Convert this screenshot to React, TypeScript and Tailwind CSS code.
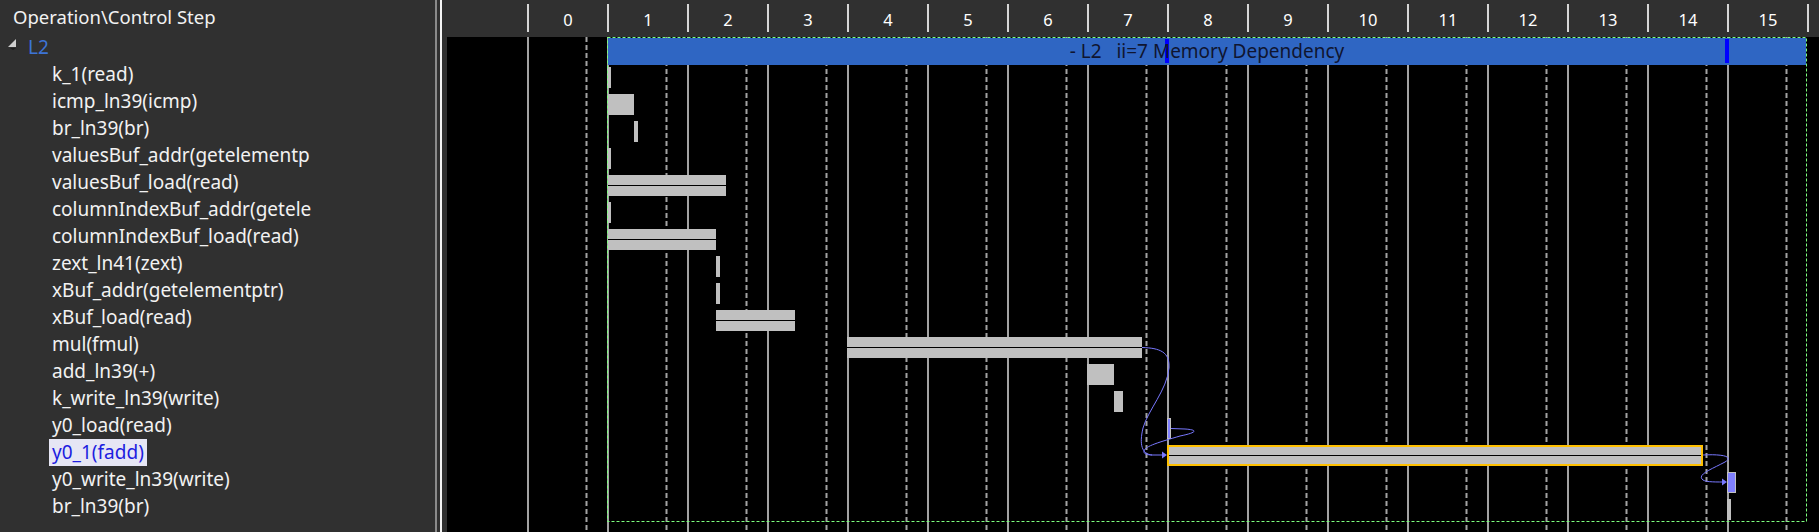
import React from "react";

const ops = [
  "k_1(read)",
  "icmp_ln39(icmp)",
  "br_ln39(br)",
  "valuesBuf_addr(getelementp",
  "valuesBuf_load(read)",
  "columnIndexBuf_addr(getele",
  "columnIndexBuf_load(read)",
  "zext_ln41(zext)",
  "xBuf_addr(getelementptr)",
  "xBuf_load(read)",
  "mul(fmul)",
  "add_ln39(+)",
  "k_write_ln39(write)",
  "y0_load(read)",
  "y0_1(fadd)",
  "y0_write_ln39(write)",
  "br_ln39(br)",
];

// bars in page x coords: [x0, x1, kind]
type Kind = "plain" | "double" | "mem" | "sel";
const bars: [number, number, Kind][] = [
  [607, 611, "plain"],
  [608, 634, "plain"],
  [634, 638, "plain"],
  [607, 611, "plain"],
  [608, 726, "double"],
  [607, 611, "plain"],
  [608, 716, "double"],
  [716, 720, "plain"],
  [716, 720, "plain"],
  [716, 795, "double"],
  [847, 1142, "double"],
  [1087, 1114, "plain"],
  [1114, 1123, "plain"],
  [1167, 1171, "mem"],
  [1167, 1703, "sel"],
  [1727, 1736, "mem"],
  [1727, 1731, "plain"],
];

const steps = Array.from({ length: 16 }, (_, i) => i);

function LeftPanel() {
  return (
    <div className="w-[435px] shrink-0 text-[19px] text-[#f2f2f2]">
      <div className="h-[34px] pl-[13px] flex items-center text-[18.5px]">Operation\Control Step</div>
      <div className="h-[27px] flex items-center">
        <svg width="28" height="27" className="block">
          <polygon points="16,5 16,13 8,13" fill="#cfcfcf" />
          <polygon points="10,14 16,14 13,16" fill="#1e1e1e" />
        </svg>
        <span className="text-[#3d74d6]">L2</span>
      </div>
      {ops.map((op, i) => (
        <div key={i} className="h-[27px] flex items-center pl-[49px]">
          {op === "y0_1(fadd)" ? (
            <span className="h-[27px] flex items-center px-[3px] bg-[#e6e6f4] text-[#1d1de0]">{op}</span>
          ) : (
            <span className="px-[3px] whitespace-nowrap">{op}</span>
          )}
        </div>
      ))}
    </div>
  );
}

function Splitter() {
  return (
    <div className="w-[12px] shrink-0 flex">
      <div className="w-[2px] bg-[#8a8a8a]" />
      <div className="w-[3px]" />
      <div className="w-[2px] bg-[#f4f4f4]" />
    </div>
  );
}

function StepHeader() {
  return (
    <div className="h-[37px] flex text-[16.5px] text-white">
      <div className="w-[80px] shrink-0" />
      {steps.map((s) => (
        <div
          key={s}
          className="w-[80px] shrink-0 mt-[4px] h-[28px] pt-[4px] border-l-2 border-[#d6d6d6] flex items-center justify-center"
        >
          {s}
        </div>
      ))}
      <div className="w-[12px] shrink-0 mt-[4px] h-[28px] border-l-2 border-[#d6d6d6]" />
    </div>
  );
}

function Chart() {
  return (
    <div className="relative flex-1 bg-black overflow-hidden">
      <svg width={1372} height={495} viewBox="447 37 1372 495" className="block">
        {/* grid */}
        {steps.map((s) => (
          <line key={"s" + s} x1={528 + 80 * s} y1={37} x2={528 + 80 * s} y2={532} stroke="#a3a3a3" strokeWidth={2} />
        ))}
        {steps.map((s) => (
          <line
            key={"d" + s}
            x1={586.5 + 80 * s}
            y1={37}
            x2={586.5 + 80 * s}
            y2={532}
            stroke="#a3a3a3"
            strokeWidth={2}
            strokeDasharray="5 3"
          />
        ))}

        {/* loop bar */}
        <rect x={608} y={38} width={1198} height={27} fill="#2f66c3" />
        <rect x={1165} y={39} width={4} height={24} fill="#0000ff" />
        <rect x={1725} y={39} width={4} height={24} fill="#0000ff" />

        {/* operation bars */}
        {bars.map(([x0, x1, kind], i) => {
          const y = 67 + 27 * i;
          const w = x1 - x0;
          if (kind === "double")
            return (
              <g key={i}>
                <rect x={x0} y={y} width={w} height={21} fill="#c0c0c0" />
                <rect x={x0} y={y + 10} width={w} height={1} fill="#000" />
              </g>
            );
          if (kind === "sel")
            return (
              <g key={i}>
                <rect x={x0 + 1} y={y + 1} width={w - 2} height={19} fill="#c0c0c0" stroke="#ffc000" strokeWidth={2} />
                <rect x={x0 + 2} y={y + 10} width={w - 4} height={1} fill="#000" />
              </g>
            );
          if (kind === "mem")
            return (
              <rect key={i} x={x0 + 0.5} y={y + 0.5} width={w - 1} height={20} fill="#8080ff" stroke="#c0c0c0" strokeWidth={1} />
            );
          return <rect key={i} x={x0} y={y} width={w} height={21} fill="#c0c0c0" />;
        })}

        {/* dependency curves */}
        <g fill="none" stroke="#7878ff" strokeWidth={1}>
          <path d="M1142 347.5 C1160 348 1170 352 1169 368 C1167 390 1148 410 1143 428 C1139 445 1142 454 1152 455 L1164 455" />
          <path d="M1171 428.5 L1185 429 C1200 430 1195 433 1180 436 C1160 442 1145 446 1144 451 C1143 454 1148 455 1152 455" />
          <path d="M1703 455 C1720 454 1735 456 1725 462 C1712 469 1698 474 1702 479 C1704 482 1712 482 1724 482" />
        </g>
        <polygon points="1162,451.5 1167,455 1162,458.5" fill="#7878ff" />
        <polygon points="1722,478.5 1727,482 1722,485.5" fill="#7878ff" />

        {/* loop region border */}
        <rect
          x={607.5}
          y={37.5}
          width={1199}
          height={484}
          fill="none"
          stroke="#7dff7d"
          strokeWidth={1}
          strokeDasharray="3 2"
        />
      </svg>
      <div className="absolute left-[161px] top-[1px] w-[1198px] h-[27px] flex items-center justify-center text-[19px] text-[#0f1530] whitespace-pre">
        - L2   ii=7 Memory Dependency
      </div>
    </div>
  );
}

export default function App() {
  return (
    <div className="w-[1819px] h-[532px] flex bg-[#303030] overflow-hidden font-['Noto_Sans','Open_Sans',sans-serif]">
      <LeftPanel />
      <Splitter />
      <div className="flex-1 flex flex-col">
        <StepHeader />
        <Chart />
      </div>
    </div>
  );
}
